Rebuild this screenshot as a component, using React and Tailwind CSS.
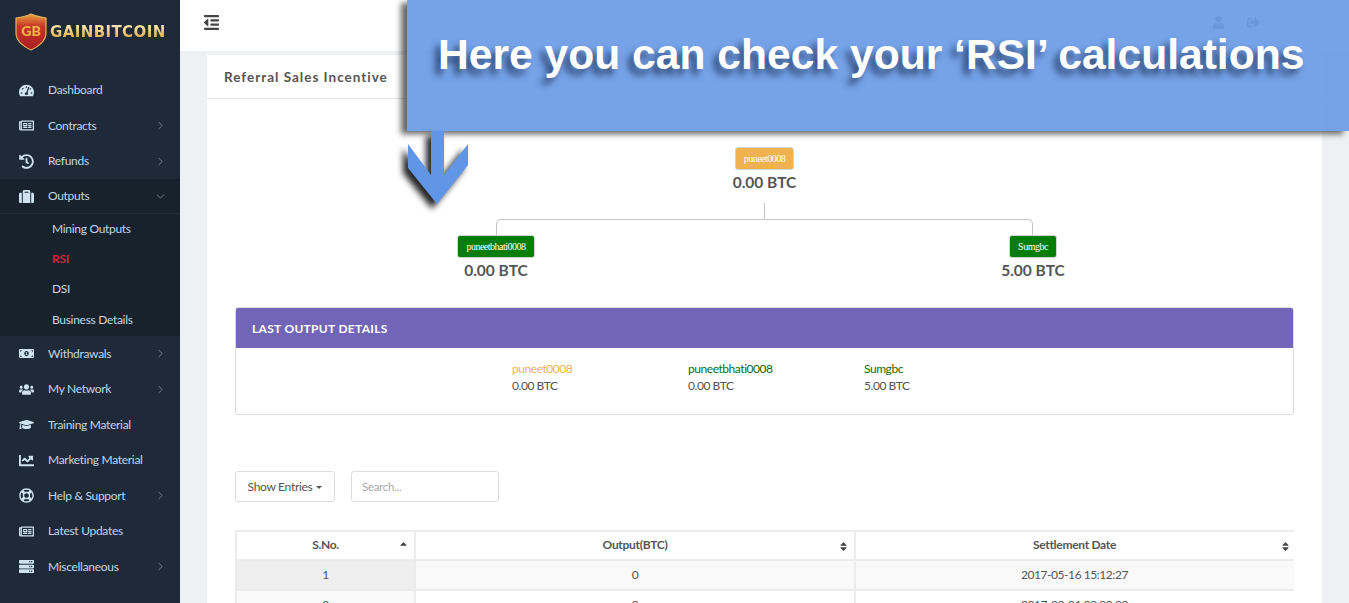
import React from "react";
import {
  FaTachometerAlt,
  FaRegNewspaper,
  FaHistory,
  FaSuitcase,
  FaMoneyBillAlt,
  FaUsers,
  FaGraduationCap,
  FaChartLine,
  FaRegLifeRing,
  FaServer,
  FaUser,
  FaSignOutAlt,
  FaOutdent,
  FaSort,
  FaSortUp,
} from "react-icons/fa";
import { ChevronRight, ChevronDown } from "lucide-react";

const MENU_TOP = [
  { label: "Dashboard", icon: FaTachometerAlt },
  { label: "Contracts", icon: FaRegNewspaper, more: true },
  { label: "Refunds", icon: FaHistory, more: true },
];

const MENU_BOTTOM = [
  { label: "Withdrawals", icon: FaMoneyBillAlt, more: true },
  { label: "My Network", icon: FaUsers, more: true },
  { label: "Training Material", icon: FaGraduationCap },
  { label: "Marketing Material", icon: FaChartLine },
  { label: "Help & Support", icon: FaRegLifeRing, more: true },
  { label: "Latest Updates", icon: FaRegNewspaper },
  { label: "Miscellaneous", icon: FaServer, more: true },
];

const SUB_MENU = ["Mining Outputs", "RSI", "DSI", "Business Details"];

const OUTPUT_COLS = [
  { name: "puneet0008", value: "0.00 BTC", color: "text-[#f0b24e]" },
  { name: "puneetbhati0008", value: "0.00 BTC", color: "text-[#0f6b0f]" },
  { name: "Sumgbc", value: "5.00 BTC", color: "text-[#0f6b0f]" },
];

const ROWS = [
  { no: 1, output: 0, date: "2017-05-16 15:12:27" },
  { no: 2, output: 0, date: "2017-03-01 00:00:00" },
];

function MenuItem({ item, open }) {
  const Icon = item.icon;
  return (
    <div className={`flex items-center pl-[19px] pr-[13px] ${open ? "h-[34px] bg-[#18222d]" : "h-[35.5px]"}`}>
      <span className="flex w-[15px] justify-center">
        <Icon className="text-[15px] text-[#cfe2f2]" />
      </span>
      <span className="ml-[14px] flex-1 text-[12px] tracking-[-0.3px] text-[#c3d5e3]">{item.label}</span>
      {item.more && !open && <ChevronRight size={13} strokeWidth={1.5} className="text-[#8494a2]" />}
      {open && <ChevronDown size={13} strokeWidth={1.5} className="text-[#8494a2]" />}
    </div>
  );
}

function Logo() {
  return (
    <div className="flex h-[72.5px] items-start pl-[15px] pt-[13px]">
      <svg width="32" height="38" viewBox="0 0 32 38">
        <defs>
          <linearGradient id="shield" x1="0" y1="0" x2="0" y2="1">
            <stop offset="0" stopColor="#e8a33a" />
            <stop offset="0.35" stopColor="#c8322a" />
            <stop offset="1" stopColor="#a81f22" />
          </linearGradient>
        </defs>
        <path d="M1 5 C8 4 12 3 16 1 C20 3 25 4 31 5 L31 20 C31 28 23 34 16 37 C9 34 1 28 1 20 Z" fill="url(#shield)" stroke="#e6b25a" strokeWidth="1.2" />
        <text x="16" y="23" textAnchor="middle" fontFamily="Lato" fontWeight="900" fontSize="14" fill="#f2b544">
          GB
        </text>
      </svg>
      <span className="ml-[3px] mt-[10px] bg-gradient-to-b from-[#fff2b8] to-[#dc9f2a] bg-clip-text font-['DejaVu_Sans'] text-[15px] font-bold leading-[18px] tracking-[0.4px] text-transparent">
        GAINBITCOIN
      </span>
    </div>
  );
}

function Sidebar() {
  return (
    <aside className="w-[180px] shrink-0 bg-[#1e2a38]">
      <Logo />
      {MENU_TOP.map((item) => (
        <MenuItem key={item.label} item={item} />
      ))}
      <MenuItem item={{ label: "Outputs", icon: FaSuitcase }} open />
      <div className="border-t border-[#202c39] bg-[#18222d] pb-[1px]">
        {SUB_MENU.map((label, i) => (
          <div
            key={label}
            className={`flex items-center pl-[52px] text-[12px] tracking-[-0.3px] ${i === 0 ? "h-[29.5px]" : "h-[30.5px]"} ${
              label === "RSI" ? "font-bold text-[#d8213f]" : "text-[#c3d5e3]"
            }`}
          >
            {label}
          </div>
        ))}
      </div>
      {MENU_BOTTOM.map((item) => (
        <MenuItem key={item.label} item={item} />
      ))}
    </aside>
  );
}

function TreeNode({ name, btc, color }) {
  return (
    <div className="flex w-[120px] flex-col items-center">
      <div className={`flex h-[23px] items-center rounded-[3px] border border-[#cfd8cf] px-[8px] font-['Liberation_Serif'] text-[10px] tracking-[-0.5px] text-white ${color}`}>
        {name}
      </div>
      <div className="mt-[1px] text-[15.5px] font-bold leading-[22px] text-[#555]">{btc}</div>
    </div>
  );
}

function Tree() {
  return (
    <div className="flex flex-col items-center pt-[48px]">
      <TreeNode name="puneet0008" btc="0.00 BTC" color="bg-[#f0b24e]" />
      <div className="mt-[10px] h-[16px] w-px bg-[#c4c4c4]" />
      <div className="h-[16px] w-[537px] rounded-t-[5px] border-x border-t border-[#c4c4c4]" />
      <div className="flex w-[657px] justify-between">
        <TreeNode name="puneetbhati0008" btc="0.00 BTC" color="bg-[#067d06]" />
        <TreeNode name="Sumgbc" btc="5.00 BTC" color="bg-[#067d06]" />
      </div>
    </div>
  );
}

function OutputPanel() {
  return (
    <div className="mt-[26px] overflow-hidden rounded-[3px] border border-[#ddd]">
      <div className="flex h-[40px] items-center bg-[#7265b8] px-[16px] pt-[1px] text-[12px] font-bold tracking-[0.3px] text-white">
        LAST OUTPUT DETAILS
      </div>
      <div className="flex h-[66px] items-start pl-[276px] pt-[12px]">
        {OUTPUT_COLS.map((col) => (
          <div key={col.name} className="w-[176px] text-[12px] leading-[17px] tracking-[-0.45px]">
            <div className={col.color}>{col.name}</div>
            <div className="text-[#555]">{col.value}</div>
          </div>
        ))}
      </div>
    </div>
  );
}

function SortableHead({ label, icon: Icon, last }) {
  return (
    <th className={`relative h-[29px] border-2 border-[#ececec] pb-[1px] text-center text-[12px] font-bold tracking-[-0.3px] text-[#555] ${last ? "pr-[3px]" : ""}`}>
      {label}
      <Icon className="absolute right-[5px] top-[9px] text-[11px] text-[#444]" />
    </th>
  );
}

function EntriesTable() {
  return (
    <div className="mt-[28px] w-[1059px] overflow-hidden">
      <table className="w-[1061px] table-fixed border-collapse">
        <colgroup>
          <col className="w-[179px]" />
          <col className="w-[440px]" />
          <col className="w-[442px]" />
        </colgroup>
        <thead>
          <tr>
            <SortableHead label="S.No." icon={FaSortUp} />
            <SortableHead label="Output(BTC)" icon={FaSort} />
            <SortableHead label="Settlement Date" icon={FaSort} last />
          </tr>
        </thead>
        <tbody>
          {ROWS.map((row, i) => (
            <tr key={row.no} className={`text-center text-[12px] tracking-[-0.45px] text-[#555] ${i === 0 ? "bg-[#f9f9f9]" : "bg-white"}`}>
              <td className={`h-[30px] border-2 border-[#ececec] ${i === 0 ? "bg-[#efefef]" : "bg-[#f9f9f9]"}`}>{row.no}</td>
              <td className="h-[30px] border-2 border-[#ececec]">{row.output}</td>
              <td className="h-[30px] border-2 border-[#ececec] pr-[3px]">{row.date}</td>
            </tr>
          ))}
        </tbody>
      </table>
    </div>
  );
}

function Banner() {
  return (
    <>
      <div className="absolute left-[407px] right-0 top-0 flex h-[131px] items-start bg-[#6799e5]/90 pl-[31px] pt-[27px] shadow-[-6px_3px_6px_rgba(0,0,0,0.6)]">
        <h2 className="whitespace-nowrap font-['Liberation_Sans'] text-[42.6px] font-bold leading-[54px] text-white [text-shadow:-5px_6px_7px_rgba(30,50,90,0.85)]">
          Here you can check your ‘RSI’ calculations
        </h2>
      </div>
      <svg className="absolute left-[396px] top-[131px] drop-shadow-[-5px_5px_3px_rgba(0,0,0,0.85)]" width="80" height="80" viewBox="0 0 80 80">
        <path d="M35 0 H48 V44 L72 13 V34 L41 73 L12 37 V13 L35 44 Z" fill="#6196e6" />
      </svg>
    </>
  );
}

export default function App() {
  return (
    <div className="relative flex h-[603px] overflow-hidden bg-[#eef1f3] font-['Lato',sans-serif]">
      <Sidebar />
      <main className="min-w-0 flex-1">
        <header className="flex h-[51px] items-center justify-between bg-white pl-[23px] pr-[89px]">
          <FaOutdent className="mb-[6px] text-[17px] text-[#444]" />
          <div className="mb-[6px] flex items-center gap-[22px] text-[13px] text-[#808080]">
            <FaUser />
            <FaSignOutAlt />
          </div>
        </header>
        <section className="mx-[27px] mt-[4px] h-[560px] bg-white">
          <div className="flex h-[44px] items-center border-b border-[#e8e8e8] pl-[17px] pt-[1px] text-[13.5px] font-bold tracking-[1px] text-[#555]">
            Referral Sales Incentive
          </div>
          <Tree />
          <div className="px-[28px]">
            <OutputPanel />
            <div className="mt-[56px] flex gap-[16px]">
              <button className="flex h-[31px] w-[100px] items-center justify-center rounded-[3px] border border-[#ddd] text-[12px] tracking-[-0.3px] text-[#555]">
                Show Entries
                <span className="ml-[4px] mt-[2px] border-x-[3px] border-t-[3px] border-x-transparent border-t-[#555]" />
              </button>
              <input
                placeholder="Search..."
                className="h-[31px] w-[148px] rounded-[3px] border border-[#ddd] px-[10px] text-[11.5px] tracking-[-0.3px] placeholder:text-[#aaa]"
              />
            </div>
            <EntriesTable />
          </div>
        </section>
      </main>
      <Banner />
    </div>
  );
}
